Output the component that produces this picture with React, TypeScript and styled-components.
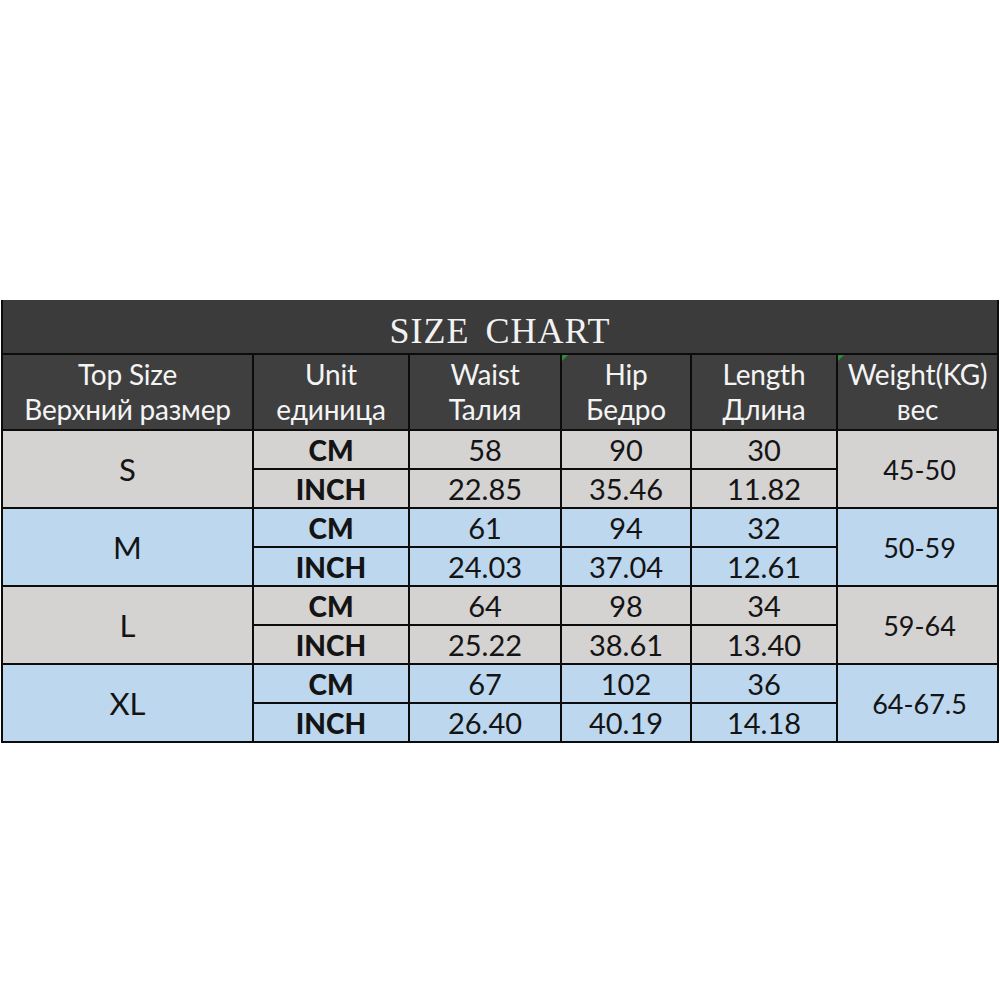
import React from "react";
import styled, { createGlobalStyle } from "styled-components";

const GlobalStyle = createGlobalStyle`
    html, body {
        margin: 0;
        padding: 0;
        background: #ffffff;
    }
`;

type Band = "gray" | "blue";

const bandColors: Record<Band, string> = {
    gray: "#d5d2d2",
    blue: "#bdd7ee",
};

const Page = styled.div`
    width: 1000px;
    height: 1000px;
    padding-top: 300px;
    padding-left: 1px;
    box-sizing: border-box;
    background: #ffffff;
`;

const Chart = styled.div`
    display: grid;
    grid-template-columns: 249px 154px 150px 128px 144px 159px;
    grid-template-rows: 53px 74px repeat(8, 37px);
    gap: 2px;
    padding: 0 2px 2px 2px;
    width: max-content;
    background: #0c0c0c;
    font-family: Lato, "Open Sans", sans-serif;
`;

const TitleCell = styled.div`
    grid-column: 1 / -1;
    background: #3b3b3b;
    color: #f2f2f2;
    display: flex;
    align-items: center;
    justify-content: center;
    padding-top: 8px;
    font-family: "Liberation Serif", serif;
    font-size: 36px;
    letter-spacing: 1px;
    word-spacing: 6px;
`;

const HeadCell = styled.div<{ $flag?: boolean }>`
    position: relative;
    background: #3f3f3f;
    color: #f4f4f4;
    display: flex;
    flex-direction: column;
    align-items: center;
    justify-content: center;
    font-size: 28px;
    line-height: 35px;
    white-space: nowrap;
    letter-spacing: -0.2px;

    &::before {
        content: "";
        display: ${(p) => (p.$flag ? "block" : "none")};
        position: absolute;
        left: 0;
        top: 0;
        border-top: 6px solid #2e8b3a;
        border-right: 6px solid transparent;
    }
`;

const BandCell = styled.div<{ $band: Band }>`
    background: ${(p) => bandColors[p.$band]};
    color: #141414;
    display: flex;
    align-items: center;
    justify-content: center;
    white-space: nowrap;
`;

const SizeCell = styled(BandCell)`
    grid-row: span 2;
    font-size: 31px;
`;

const UnitCell = styled(BandCell)`
    font-weight: 900;
    font-size: 28px;
`;

const ValueCell = styled(BandCell)`
    font-size: 29px;
`;

const WeightCell = styled(BandCell)`
    grid-row: span 2;
    grid-column: 6;
    font-size: 27px;
    padding-left: 4px;
`;

interface SizeRow {
    size: string;
    band: Band;
    cm: string[];
    inch: string[];
    weight: string;
}

const rows: SizeRow[] = [
    { size: "S", band: "gray", cm: ["58", "90", "30"], inch: ["22.85", "35.46", "11.82"], weight: "45-50" },
    { size: "M", band: "blue", cm: ["61", "94", "32"], inch: ["24.03", "37.04", "12.61"], weight: "50-59" },
    { size: "L", band: "gray", cm: ["64", "98", "34"], inch: ["25.22", "38.61", "13.40"], weight: "59-64" },
    { size: "XL", band: "blue", cm: ["67", "102", "36"], inch: ["26.40", "40.19", "14.18"], weight: "64-67.5" },
];

const headers = [
    { en: "Top Size", ru: "Верхний размер", flag: false },
    { en: "Unit", ru: "единица", flag: false },
    { en: "Waist", ru: "Талия", flag: false },
    { en: "Hip", ru: "Бедро", flag: true },
    { en: "Length", ru: "Длина", flag: false },
    { en: "Weight(KG)", ru: "вес", flag: true },
];

export default function App() {
    return (
        <>
            <GlobalStyle />
            <Page>
                <Chart>
                    <TitleCell>SIZE CHART</TitleCell>
                    {headers.map((h) => (
                        <HeadCell key={h.en} $flag={h.flag}>
                            <span>{h.en}</span>
                            <span>{h.ru}</span>
                        </HeadCell>
                    ))}
                    {rows.map((r) => (
                        <React.Fragment key={r.size}>
                            <SizeCell $band={r.band}>{r.size}</SizeCell>
                            <UnitCell $band={r.band}>CM</UnitCell>
                            {r.cm.map((v, i) => (
                                <ValueCell key={"cm" + i} $band={r.band}>
                                    {v}
                                </ValueCell>
                            ))}
                            <WeightCell $band={r.band}>{r.weight}</WeightCell>
                            <UnitCell $band={r.band}>INCH</UnitCell>
                            {r.inch.map((v, i) => (
                                <ValueCell key={"in" + i} $band={r.band}>
                                    {v}
                                </ValueCell>
                            ))}
                        </React.Fragment>
                    ))}
                </Chart>
            </Page>
        </>
    );
}
